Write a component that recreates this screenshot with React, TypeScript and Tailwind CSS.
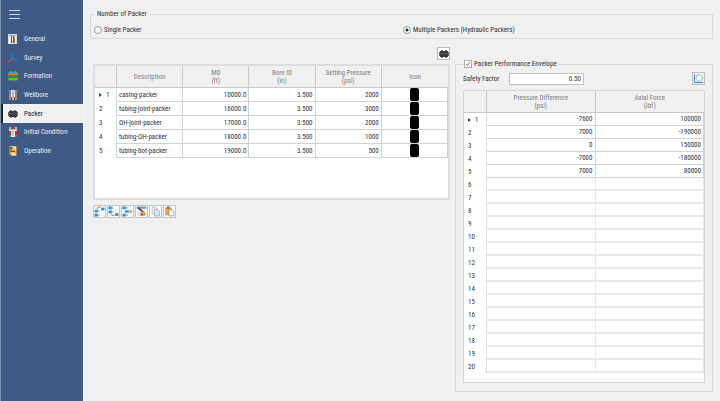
import React, { useState } from 'react';

interface Packer {
  description: string;
  md: string;
  boreId: string;
  pressure: string;
}

const packers: Packer[] = [
  { description: 'casing-packer', md: '10000.0', boreId: '3.500', pressure: '2000' },
  { description: 'tubing-joint-packer', md: '16000.0', boreId: '3.500', pressure: '3000' },
  { description: 'OH-joint-packer', md: '17000.0', boreId: '3.500', pressure: '2000' },
  { description: 'tubing-OH-packer', md: '18000.0', boreId: '3.500', pressure: '1000' },
  { description: 'tubing-bot-packer', md: '19000.0', boreId: '3.500', pressure: '500' },
];

const envelope = [
  ['-7600', '100000'],
  ['7000', '-190000'],
  ['0', '150000'],
  ['-7000', '-180000'],
  ['7000', '80000'],
];

const ENVELOPE_ROWS = 20;

const GeneralIcon = () => (
  <svg viewBox="0 0 10 10" className="size-[10px]">
    <rect x="0" y="0" width="9" height="10" fill="#d5dde6" />
    <rect x="1" y="1" width="7" height="1" fill="#8fb4dc" />
    <rect x="1" y="3" width="2" height="6" fill="#f4f6f8" />
    <rect x="3" y="2" width="1" height="7" fill="#4b4f5b" />
    <rect x="4" y="2" width="1" height="7" fill="#e8ded0" />
    <rect x="5" y="2" width="1" height="7" fill="#3f6aa8" />
    <rect x="6" y="3" width="1" height="6" fill="#c4693c" />
    <rect x="7" y="3" width="1" height="6" fill="#f4f6f8" />
  </svg>
);

const SurveyIcon = () => (
  <svg viewBox="0 0 20 20" className="size-[10px]" fill="none" strokeWidth="2.6" strokeLinecap="round">
    <path d="M9 2v9" stroke="#1f7bea" />
    <path d="M9 11c-2 1-4 3-8 7" stroke="#ee4a20" />
    <path d="M9 11c3 0 5 3 9 4" stroke="#1f7bea" />
  </svg>
);

const FormationIcon = () => (
  <svg viewBox="0 0 20 20" className="size-[10px]">
    <path d="M2 2l4-2 4 2 4-2 5 2v4H1z" fill="#31a7b8" />
    <rect x="0" y="4" width="20" height="4" fill="#d9772b" />
    <rect x="0" y="8" width="20" height="4" fill="#129a3f" />
    <rect x="0" y="12" width="20" height="2" fill="#b7472a" />
    <path d="M0 14h20l-2 5H2z" fill="#6fb83a" />
  </svg>
);

const WellboreIcon = () => (
  <svg viewBox="0 0 10 10" className="size-[10px]">
    <rect x="1" y="0" width="8" height="5" fill="#85898f" />
    <rect x="1" y="5" width="2" height="5" fill="#b98a4a" />
    <rect x="7" y="5" width="2" height="5" fill="#b98a4a" />
    <rect x="3" y="0" width="4" height="7" fill="#dfe2e6" />
    <rect x="4" y="1" width="2" height="9" fill="#b5b9c0" />
    <rect x="3" y="7" width="1" height="2" fill="#6b5a40" />
    <rect x="6" y="7" width="1" height="2" fill="#6b5a40" />
  </svg>
);

const PackerIcon = () => (
  <svg viewBox="0 0 10 10" className="size-[10px]">
    <path d="M2 1h2v1H2zM6 1h2v1H6zM2 8h2v1H2zM6 8h2v1H6z" fill="#777" />
    <rect x="0" y="3" width="10" height="4" fill="#666" />
    <rect x="1" y="2" width="8" height="6" fill="#3c3c3c" />
    <rect x="1" y="4" width="8" height="1" fill="#585858" />
  </svg>
);

const InitialConditionIcon = () => (
  <svg viewBox="0 0 10 10" className="size-[10px]">
    <rect x="1" y="0" width="8" height="3" fill="#8fc4cc" />
    <rect x="1" y="3" width="8" height="7" fill="#eef0f2" />
    <rect x="3" y="0" width="4" height="2" fill="#c8391f" />
    <rect x="4" y="2" width="2" height="7" fill="#c3c8ce" />
    <rect x="1" y="4" width="2" height="4" fill="#e81c18" />
    <rect x="7" y="4" width="2" height="4" fill="#e81c18" />
    <rect x="1" y="8" width="2" height="2" fill="#2aa35a" />
    <rect x="7" y="8" width="2" height="2" fill="#2aa35a" />
  </svg>
);

const OperationIcon = () => (
  <svg viewBox="0 0 20 20" className="size-[10px]">
    <rect x="3" y="0" width="14" height="20" fill="#e9b14a" />
    <path d="M4 2l5 1-3 5-2-1z" fill="#5a4a35" />
    <path d="M10 2h6v5l-4 1z" fill="#f6dd9a" />
    <path d="M4 9l10 1v2L5 12z" fill="#6b5332" />
    <path d="M6 15l5-2 5 3-1 2H7z" fill="#fbe7b4" />
    <path d="M3 14l3 3v3H3z" fill="#6b5332" />
  </svg>
);

const navItems = [
  { label: 'General', icon: GeneralIcon },
  { label: 'Survey', icon: SurveyIcon },
  { label: 'Formation', icon: FormationIcon },
  { label: 'Wellbore', icon: WellboreIcon },
  { label: 'Packer', icon: PackerIcon },
  { label: 'Initial Condition', icon: InitialConditionIcon },
  { label: 'Operation', icon: OperationIcon },
];

const tools = [
  {
    label: 'Insert row above',
    icon: (
      <>
        <path d="M1 7h6v5H1zM1 14h6v5H1z" fill="#2493ea" />
        <path d="M7 8h3v3H7zM7 15h3v3H7z" fill="#8fcbf5" />
        <path d="M13 3h6v5h-6z" fill="#2493ea" />
        <path d="M5 5l4-3h3" stroke="#f08a2c" strokeWidth="2.4" fill="none" />
      </>
    ),
  },
  {
    label: 'Insert row below',
    icon: (
      <>
        <path d="M1 1h6v5H1zM1 8h6v5H1z" fill="#2493ea" />
        <path d="M7 2h3v3H7zM7 9h3v3H7z" fill="#8fcbf5" />
        <path d="M13 13h6v5h-6z" fill="#2493ea" />
        <path d="M5 15l4 2h3" stroke="#f08a2c" strokeWidth="2.4" fill="none" />
      </>
    ),
  },
  {
    label: 'Delete row',
    icon: (
      <>
        <path d="M1 1h6v5H1zM1 14h6v5H1z" fill="#2493ea" />
        <path d="M7 2h4v3H7zM7 15h4v3H7z" fill="#8fcbf5" />
        <path d="M5 8h8v4H5z" fill="#2493ea" />
        <path d="M14 6l5 4-5 4z" fill="#f08a2c" />
      </>
    ),
  },
  {
    label: 'Clear',
    icon: (
      <>
        <path d="M1 1h18v4H1z" fill="#49a9ea" />
        <path d="M2 6h16v12H2z" fill="#dbe8f3" />
        <path d="M4 3l9 8" stroke="#6b3f20" strokeWidth="3" />
        <path d="M10 11l4-2 4 5-3 4-6-1z" fill="#e09a24" />
        <path d="M9 12l3 6-4-1z" fill="#a33b1c" />
      </>
    ),
  },
  {
    label: 'Copy',
    icon: (
      <>
        <path d="M4 2h6l3 3v9H4z" fill="#f4f6f9" stroke="#9aa6b5" strokeWidth="1.2" />
        <path d="M8 6h6l3 3v9H8z" fill="#dfe6ee" stroke="#8593a5" strokeWidth="1.2" />
      </>
    ),
  },
  {
    label: 'Paste',
    icon: (
      <>
        <path d="M2 3h12v14H2z" fill="#efa53a" />
        <path d="M5 1h6v4H5z" fill="#8a7a63" />
        <path d="M9 7h6l3 3v8H9z" fill="#eef2f6" stroke="#8593a5" strokeWidth="1.2" />
      </>
    ),
  },
];

const th = 'border-r border-b border-[#c8c8c8] p-0 font-normal text-[#808080] last:border-r-0';
const td = 'border-r border-b border-[#d2d2d2] px-[2px] py-0';
const tdEmpty = 'border-r border-b-2 border-[#e8e8e8] p-0';

const RowNumber = ({ n }: { n: number }) => (
  <th scope="row" className="border-r border-[#dcdcdc] p-0 font-normal">
    <div className="flex items-center gap-[4px] pl-[4px]">
      {n === 1 && (
        <svg viewBox="0 0 3 4" className="h-[4px] w-[3px]">
          <path d="M0 0l3 2-3 2z" fill="#444" />
        </svg>
      )}
      {n}
    </div>
  </th>
);

const Sidebar = () => {
  const [active, setActive] = useState('Packer');

  return (
    <aside className="w-[84px] shrink-0 border-r border-l border-r-[#f8f8f8] border-l-[#7f93b0] bg-[#405a86]">
      <button aria-label="Menu" className="mt-[10px] ml-[8px] flex h-[9px] w-[11px] flex-col justify-between">
        <span className="h-px w-full bg-[#cfd8e6]" />
        <span className="h-px w-full bg-[#cfd8e6]" />
        <span className="h-px w-full bg-[#cfd8e6]" />
      </button>
      <nav className="mt-[11px] grid h-[130px] grid-rows-7">
        {navItems.map(({ label, icon: Icon }) => (
          <button
            key={label}
            onClick={() => setActive(label)}
            className={`flex items-center gap-[6px] border-l-2 pl-[5px] text-left ${
              active === label ? 'border-[#222] bg-[#f0f0f0] text-[#222]' : 'border-transparent text-[#e6ecf5]'
            }`}
          >
            <Icon />
            {label}
          </button>
        ))}
      </nav>
    </aside>
  );
};

const PackerTable = () => (
  <div className="h-[136px] border-2 border-[#dedede] bg-white">
    <table className="w-full table-fixed border-separate border-spacing-0">
      <colgroup>
        <col className="w-[22px]" />
        <col />
        <col />
        <col />
        <col />
        <col />
      </colgroup>
      <thead className="bg-[#f0f0f0]">
        <tr className="h-[22px]">
          <th className={th} />
          <th className={th}>Description</th>
          <th className={th}>MD<br />(ft)</th>
          <th className={th}>Bore ID<br />(in)</th>
          <th className={th}>Setting Pressure<br />(psi)</th>
          <th className={th}>Icon</th>
        </tr>
      </thead>
      <tbody>
        {packers.map((p, i) => (
          <tr key={p.description} className="h-[14px]">
            <RowNumber n={i + 1} />
            <td className={td}>{p.description}</td>
            <td className={`${td} text-right`}>{p.md}</td>
            <td className={`${td} text-right`}>{p.boreId}</td>
            <td className={`${td} text-right`}>{p.pressure}</td>
            <td className={td}>
              <div className="mx-auto h-[13px] w-[9px] rounded-[2px] bg-black" />
            </td>
          </tr>
        ))}
      </tbody>
    </table>
  </div>
);

const EnvelopeTable = () => (
  <div className="mt-[5px] h-[293px] border border-[#d4d4d4] bg-white">
    <table className="w-full table-fixed border-separate border-spacing-0">
      <colgroup>
        <col className="w-[23px]" />
        <col />
        <col />
      </colgroup>
      <thead className="bg-[#f0f0f0]">
        <tr className="h-[22px]">
          <th className={th} />
          <th className={th}>Pressure Difference<br />(psi)</th>
          <th className={th}>Axial Force<br />(lbf)</th>
        </tr>
      </thead>
      <tbody>
        {Array.from({ length: ENVELOPE_ROWS }, (_, i) => (
          <tr key={i} className="h-[13px]">
            <RowNumber n={i + 1} />
            <td className={`${envelope[i] ? td : tdEmpty} text-right`}>{envelope[i]?.[0]}</td>
            <td className={`${envelope[i] ? td : tdEmpty} text-right`}>{envelope[i]?.[1]}</td>
          </tr>
        ))}
      </tbody>
    </table>
  </div>
);

export default function App() {
  const [mode, setMode] = useState('multiple');
  const [showEnvelope, setShowEnvelope] = useState(true);
  const [safetyFactor, setSafetyFactor] = useState('0.50');

  const radio =
    'size-[8px] appearance-none rounded-full border border-[#9a9a9a] bg-white checked:bg-[radial-gradient(circle,#333_0_1px,#fff_2px)]';

  return (
    <div className="flex min-h-screen bg-[#f0f0f0] font-['Roboto_Condensed','Roboto','Liberation_Sans',sans-serif] text-[7px] leading-[8px] text-[#333]">
      <Sidebar />
      <main className="flex-1 pt-[10px] pr-[7px] pl-[6px]">
        <fieldset className="h-[29px] border border-[#d8d8d8] pl-[3px]">
          <legend className="px-[3px]">Number of Packer</legend>
          <div className="grid grid-cols-2 pt-[8px]">
            <label className="flex items-center gap-[2px]">
              <input type="radio" name="mode" className={radio} checked={mode === 'single'} onChange={() => setMode('single')} />
              Single Packer
            </label>
            <label className="flex items-center gap-[2px]">
              <input type="radio" name="mode" className={radio} checked={mode === 'multiple'} onChange={() => setMode('multiple')} />
              Multiple Packers (Hydraulic Packers)
            </label>
          </div>
        </fieldset>

        <div className="mt-[8px] grid grid-cols-[360fr_258fr] gap-[5px]">
          <section className="pl-[3px]">
            <div className="mb-[4px] flex justify-end">
              <button aria-label="Packer icon" className="flex size-[13px] items-center justify-center border border-[#bdbdbd] bg-white">
                <PackerIcon />
              </button>
            </div>
            <PackerTable />
            <div className="mt-[5px] flex gap-px">
              {tools.map((tool) => (
                <button key={tool.label} aria-label={tool.label} className="flex size-[13px] items-center justify-center border border-[#c4c4c4] bg-[#fafafa]">
                  <svg viewBox="0 0 20 20" className="size-[11px]">{tool.icon}</svg>
                </button>
              ))}
            </div>
          </section>

          <fieldset className="mt-[13px] border border-[#d8d8d8] px-[7px] pb-[8px]">
            <legend className="px-[1px]">
              <label className="flex items-center gap-[2px]">
                <input
                  type="checkbox"
                  className="peer sr-only"
                  checked={showEnvelope}
                  onChange={(e) => setShowEnvelope(e.target.checked)}
                />
                <span className="flex size-[8px] items-center justify-center border border-[#b0b0b0] bg-white peer-checked:*:block">
                  <svg viewBox="0 0 6 6" className="hidden size-[6px]" fill="none" stroke="#555" strokeWidth="0.8">
                    <path d="M1 3l1.5 1.5L5 1" />
                  </svg>
                </span>
                Packer Performance Envelope
              </label>
            </legend>
            <div className="flex items-center pt-[4px]">
              <label htmlFor="safety" className="w-[46px]">Safety Factor</label>
              <input
                id="safety"
                value={safetyFactor}
                onChange={(e) => setSafetyFactor(e.target.value)}
                className="h-[12px] w-[75px] border border-[#c0c0c0] bg-white px-[2px] text-right"
              />
              <button aria-label="Plot envelope" className="ml-auto flex size-[13px] items-center justify-center border border-[#c0c0c0] bg-[#eef2f7]">
                <svg viewBox="0 0 22 22" className="size-[11px]" fill="none" stroke="#4a8ad8">
                  <path d="M3 2v17h17" strokeWidth="2" />
                  <path d="M1 4h2M1 9h2M1 14h2M8 19v2M13 19v2M18 19v2" strokeWidth="1" />
                  <path d="M9 4h6l4 4v4l-4 4H9l-3-4V8z" fill="#f8fafc" strokeWidth="1.6" strokeDasharray="3 1" />
                </svg>
              </button>
            </div>
            <EnvelopeTable />
          </fieldset>
        </div>
      </main>
    </div>
  );
}
